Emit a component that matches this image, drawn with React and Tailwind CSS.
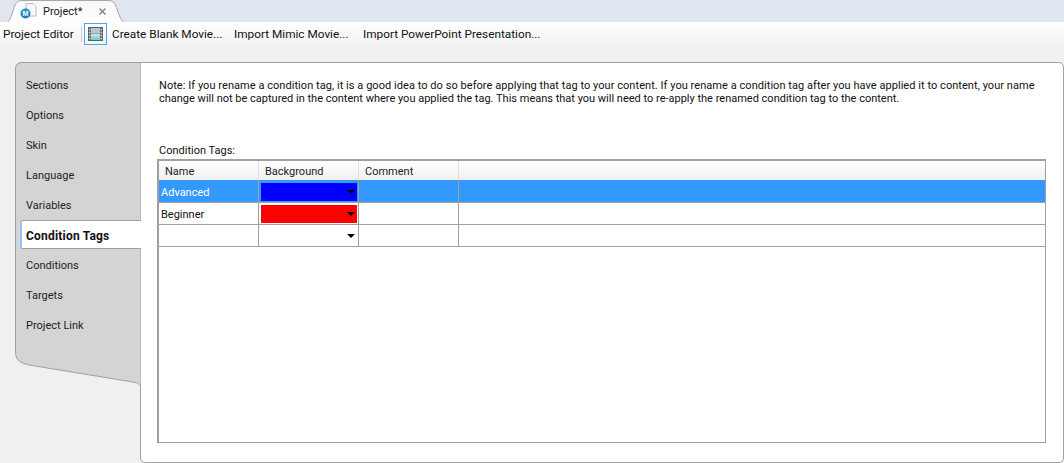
const FONT = "font-['Roboto',sans-serif]";

function Film() {
  return (
    <svg width="15" height="14" viewBox="0 0 15 14">
      <defs>
        <linearGradient id="fg" x1="0" y1="0" x2="0" y2="1">
          <stop offset="0" stopColor="#d8e4e4" />
          <stop offset="1" stopColor="#5fd0d8" />
        </linearGradient>
      </defs>
      <rect x="0.5" y="0.5" width="14" height="13" fill="#6e7676" stroke="#5c6464" />
      <rect x="3" y="1" width="9" height="5.500" fill="#b8c8c8" />
      <rect x="3" y="7" width="9" height="6" fill="url(#fg)" />
      {[2, 5, 8, 11].map((y) => (
        <g key={y} fill="#dfe8e8">
          <rect x="1" y={y} width="1.200" height="1.200" />
          <rect x="12.800" y={y} width="1.200" height="1.200" />
        </g>
      ))}
    </svg>
  );
}

function DocIcon() {
  return (
    <svg width="18" height="16" viewBox="0 0 18 16">
      <path d="M6 0.5 H13 L16 3.5 V13 H6 Z" fill="#f6f8fb" stroke="#b8bcc4" />
      <circle cx="5.500" cy="10.500" r="5" fill="#1a7fc4" />
      <path d="M1 10.500 A4.500 4.500 0 0 1 10 10.500 Z" fill="#3aa0e0" opacity="0.6" />
      <text x="5.500" y="13" textAnchor="middle" fontSize="7" fontWeight="700" fill="#fff" fontFamily="Liberation Sans">M</text>
    </svg>
  );
}

function Tab() {
  return (
    <div className="relative ml-[7px] flex h-[22px] w-[117px] items-center">
      <svg className="absolute inset-0" width="117" height="22" viewBox="0 0 117 22">
        <defs>
          <linearGradient id="tg" x1="0" y1="0" x2="0" y2="1">
            <stop offset="0" stopColor="#f8f8f8" />
            <stop offset="1" stopColor="#ffffff" />
          </linearGradient>
        </defs>
        <path d="M0.5 22 C4 20 6 10 8 5 C9.500 2 11 0.500 15 0.500 H102 C105 0.500 107 2 108.500 5 C111 11 113 20 116.500 22 Z" fill="url(#tg)" />
        <path d="M0.5 22 C4 20 6 10 8 5 C9.500 2 11 0.500 15 0.500 H102 C105 0.500 107 2 108.500 5 C111 11 113 20 116.500 22" fill="none" stroke="#a8a8a8" />
      </svg>
      <div className="relative ml-[13px] flex items-center">
        <DocIcon />
        <span className="ml-[5px] w-[38px] whitespace-nowrap text-[11px] leading-none text-[#1a1a1a]">Project*</span>
        <svg className="ml-[18px]" width="7" height="7" viewBox="0 0 7 7">
          <path d="M0.5 0.5 L6.500 6.500 M6.500 0.500 L0.500 6.500" stroke="#777" strokeWidth="1.200" />
        </svg>
      </div>
    </div>
  );
}

const sections = ["Sections", "Options", "Skin", "Language", "Variables", "Condition Tags", "Conditions", "Targets", "Project Link"];

function Sidebar() {
  return (
    <div className="relative w-[125px] shrink-0">
      <svg className="absolute left-0 top-0" width="126" height="328" viewBox="0 0 126 328">
        <path d="M0.5 290 V7 Q0.500 0.500 7 0.500 H126 V326 C125.500 322 123 321 118 320 L14 303 C5 301 0.500 298 0.500 290 Z" fill="#d4d4d4" stroke="#a0a0a0" />
      </svg>
      <div className="relative flex flex-col pt-[8px]">
        {sections.map((s) =>
          s === "Condition Tags" ? (
            <div key={s} className="mb-[1px] ml-[5px] mr-[-1px] flex h-[29px] items-center rounded-l-[2px] border-y border-[#a0a0a0] border-l-[2px] border-l-[#90c4ff] bg-white pl-[4px] pt-[3px] text-[12px] font-bold tracking-[0.2px] text-[#111]">
              {s}
            </div>
          ) : (
            <div key={s} className="flex h-[30px] items-center pl-[11px] pt-[3px] text-[11px] text-[#222]">
              {s}
            </div>
          )
        )}
      </div>
    </div>
  );
}

const cols = "w-[100px] shrink-0 border-r border-[#a0a0a0]";

function Row({ name, color, selected, first }) {
  return (
    <div className={`flex ${first ? "h-[23px]" : "h-[22px]"} border-b border-[#a0a0a0] text-[11px] ${selected ? "bg-[#3399ff] text-white" : "bg-white text-[#111]"}`}>
      <div className={`${cols} flex items-center pl-[2px] ${first ? "pt-[5px]" : "pt-[4px]"}`}>{name}</div>
      <div className={`${cols} relative flex items-end pb-[1px] pl-[2px] pr-[1px]`}>
        <div className="h-[18px] w-full" style={{ background: color || "transparent" }} />
        <svg className="absolute bottom-[8px] right-[3px]" width="8" height="4" viewBox="0 0 8 4">
          <path d="M0 0 H8 L4 4 Z" fill="#000" />
        </svg>
      </div>
      <div className={cols} />
      <div className="flex-1" />
    </div>
  );
}

function Grid() {
  return (
    <div className="ml-[16px] mr-[17px] mt-[1px] h-[284px] border border-l-2 border-t-2 border-[#a0a0a0] bg-white">
      <div className="flex h-[19px] bg-gradient-to-b from-white to-[#f0f0f0] text-[11px] text-[#222]">
        {["Name", "Background", "Comment"].map((h) => (
          <div key={h} className="flex w-[100px] shrink-0 items-center border-r border-[#e0e0e0] pl-[6px] pt-[4px]">{h}</div>
        ))}
        <div className="flex-1" />
      </div>
      <Row name="Advanced" color="#0000ff" selected first />
      <Row name="Beginner" color="#ff0000" />
      <Row name="" />
    </div>
  );
}

export default function App() {
  return (
    <div className={`${FONT} flex h-[463px] w-[1064px] flex-col overflow-hidden bg-[#f0f0f0]`}>
      <div className="flex h-[22px] shrink-0 items-end bg-[#dfe6ef]">
        <Tab />
      </div>
      <div className="flex h-[24px] shrink-0 items-center bg-gradient-to-b from-white to-[#f2f2f2] text-[11.800px] text-[#111]">
        <span className="ml-[3px] mt-[2px] w-[71px] whitespace-nowrap">Project Editor</span>
        <div className="ml-[7px] h-[16px] w-px bg-[#c8c8c8]" />
        <div className="ml-[2px] flex h-[22px] w-[23px] items-center justify-center border-[1.500px] border-[#4da3f5]">
          <Film />
        </div>
        <span className="ml-[5px] mt-[2px] w-[122px] whitespace-nowrap">Create Blank Movie...</span>
        <span className="mt-[2px] w-[129px] whitespace-nowrap">Import Mimic Movie...</span>
        <span className="mt-[2px] whitespace-nowrap">Import PowerPoint Presentation...</span>
      </div>
      <div className="flex min-h-0 flex-1 pl-[15px] pt-[16px]">
        <Sidebar />
        <div className="h-[401px] min-w-0 flex-1 rounded-r-[5px] rounded-bl-[5px] border border-[#a0a0a0] bg-white">
          <p className="ml-[18px] mt-[16px] whitespace-nowrap text-[11px] leading-[13px] text-[#111]">
            <span className="tracking-[0.05px]">Note: If you rename a condition tag, it is a good idea to do so before applying that tag to your content. If you rename a condition tag after you have applied it to content, your name</span><br />
            change will not be captured in the content where you applied the tag. This means that you will need to re-apply the renamed condition tag to the content.
          </p>
          <div className="ml-[18px] mt-[39px] text-[11px] leading-[14px] text-[#111]">Condition Tags:</div>
          <Grid />
        </div>
      </div>
    </div>
  );
}
